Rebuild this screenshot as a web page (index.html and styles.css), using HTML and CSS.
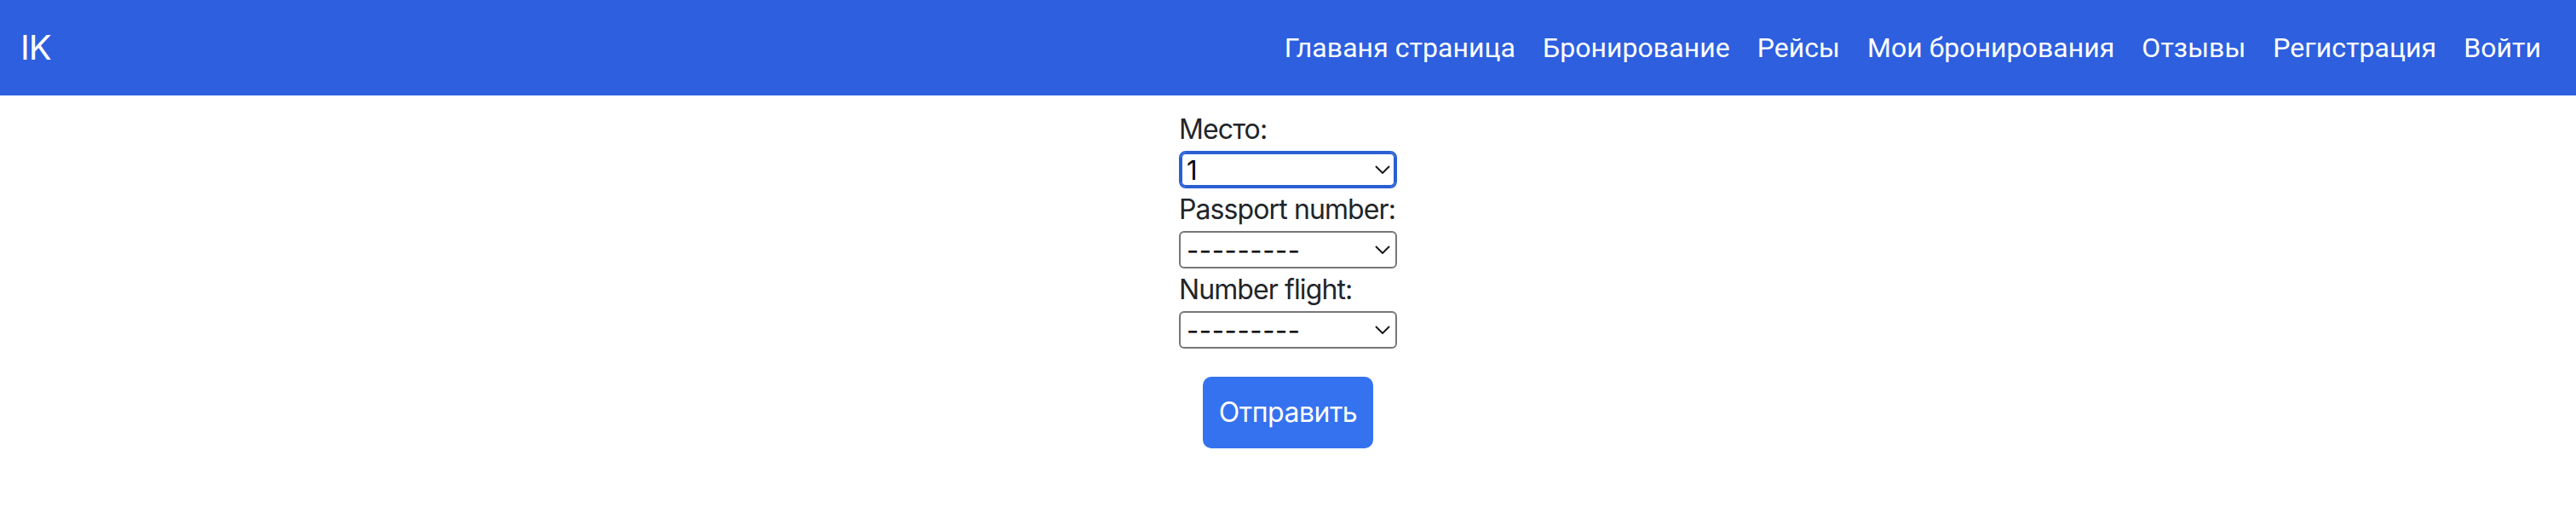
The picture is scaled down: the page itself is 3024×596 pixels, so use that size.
FILE: index.html
```html
<!DOCTYPE html>
<html lang="ru">
<head>
<meta charset="utf-8">
<title>IK</title>
<link rel="stylesheet" href="styles.css">
</head>
<body>
<nav class="navbar">
  <a class="brand" href="#">IK</a>
  <ul class="nav-links">
    <li><a href="#">Главаня страница</a></li>
    <li><a href="#">Бронирование</a></li>
    <li><a href="#">Рейсы</a></li>
    <li><a href="#">Мои бронирования</a></li>
    <li><a href="#">Отзывы</a></li>
    <li><a href="#">Регистрация</a></li>
    <li><a href="#">Войти</a></li>
  </ul>
</nav>
<main class="page">
  <form class="booking-form">
    <label class="field-label" for="seat">Место:</label>
    <div class="select-wrap">
      <select id="seat" class="select focused"><option>1</option></select>
      <svg class="chevron" width="18" height="10" viewBox="0 0 18 10"><path d="M1 1 L9 9 L17 1" fill="none" stroke="#1a1a1a" stroke-width="2"/></svg>
    </div>
    <label class="field-label" for="passport">Passport number:</label>
    <div class="select-wrap">
      <select id="passport" class="select"><option>---------</option></select>
      <svg class="chevron" width="18" height="10" viewBox="0 0 18 10"><path d="M1 1 L9 9 L17 1" fill="none" stroke="#1a1a1a" stroke-width="2"/></svg>
    </div>
    <label class="field-label" for="flight">Number flight:</label>
    <div class="select-wrap">
      <select id="flight" class="select"><option>---------</option></select>
      <svg class="chevron" width="18" height="10" viewBox="0 0 18 10"><path d="M1 1 L9 9 L17 1" fill="none" stroke="#1a1a1a" stroke-width="2"/></svg>
    </div>
    <div class="actions">
      <button type="submit" class="btn">Отправить</button>
    </div>
  </form>
</main>
</body>
</html>
```
FILE: styles.css
```css
* { box-sizing: border-box; }

html, body {
  margin: 0;
  padding: 0;
  background: #ffffff;
}

body {
  font-family: Inter, "Noto Sans", sans-serif;
  color: #212529;
}

.navbar {
  height: 112px;
  background: #2d5fdf;
  display: flex;
  align-items: center;
  justify-content: space-between;
  padding: 0 25px 0 24px;
}

.brand {
  color: #ffffff;
  text-decoration: none;
  font-family: Inter, "Noto Sans", sans-serif;
  font-size: 40px;
  line-height: 60px;
  letter-spacing: -1px;
}

.nav-links {
  list-style: none;
  margin: 0;
  padding: 0;
  display: flex;
}

.nav-links a {
  display: block;
  padding: 0 16px;
  color: #ffffff;
  text-decoration: none;
  font-family: Roboto, "Noto Sans", sans-serif;
  font-size: 32px;
  line-height: 48px;
  letter-spacing: 0.05px;
}

.page {
  padding-top: 16px;
}

.booking-form {
  width: 256px;
  margin: 0 auto;
  display: flex;
  flex-direction: column;
}

.field-label {
  display: block;
  font-size: 32px;
  line-height: 48px;
  letter-spacing: -0.9px;
  color: #212529;
  white-space: nowrap;
}

.select-wrap {
  position: relative;
  margin: 1px 0;
  height: 44px;
}

.select {
  appearance: none;
  -webkit-appearance: none;
  width: 256px;
  height: 44px;
  margin: 0;
  border: 2px solid #767676;
  border-radius: 6px;
  background: #ffffff;
  color: #000000;
  font-family: Inter, "Noto Sans", sans-serif;
  font-size: 31px;
  letter-spacing: 0.6px;
  padding: 0 30px 0 7px;
  outline: none;
}

.select.focused {
  border-color: #2a5fd3;
  box-shadow: inset 0 0 0 2px #2a5fd3;
  border-radius: 8px;
}

.chevron {
  position: absolute;
  right: 8px;
  top: 17px;
  pointer-events: none;
}

.actions {
  display: flex;
  justify-content: center;
  margin-top: 32px;
}

.btn {
  font-family: Inter, "Noto Sans", sans-serif;
  font-size: 32px;
  line-height: 48px;
  letter-spacing: -0.5px;
  padding: 18px 19px;
  border: 0;
  border-radius: 10px;
  background: #3572ef;
  color: #ffffff;
  cursor: pointer;
}
```
